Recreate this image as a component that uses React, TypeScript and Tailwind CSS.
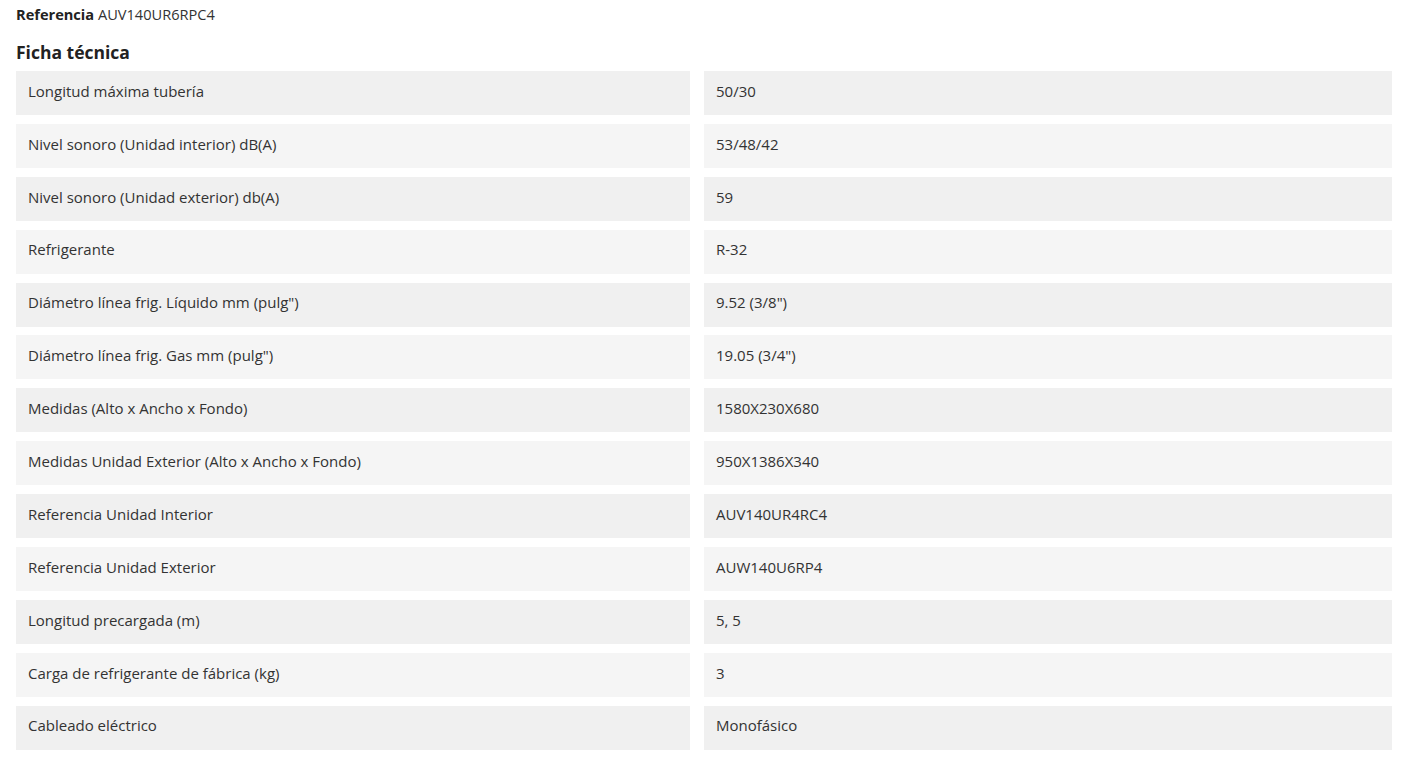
const rows: [string, string][] = [
  ["Longitud máxima tubería", "50/30"],
  ["Nivel sonoro (Unidad interior) dB(A)", "53/48/42"],
  ["Nivel sonoro (Unidad exterior) db(A)", "59"],
  ["Refrigerante", "R-32"],
  ["Diámetro línea frig. Líquido mm (pulg\")", "9.52 (3/8\")"],
  ["Diámetro línea frig. Gas mm (pulg\")", "19.05 (3/4\")"],
  ["Medidas (Alto x Ancho x Fondo)", "1580X230X680"],
  ["Medidas Unidad Exterior (Alto x Ancho x Fondo)", "950X1386X340"],
  ["Referencia Unidad Interior", "AUV140UR4RC4"],
  ["Referencia Unidad Exterior", "AUW140U6RP4"],
  ["Longitud precargada (m)", "5, 5"],
  ["Carga de refrigerante de fábrica (kg)", "3"],
  ["Cableado eléctrico", "Monofásico"],
];

export default function App() {
  return (
    <div className="min-h-screen bg-white pl-[16px] pr-[12px] text-[#333] font-['Open_Sans',sans-serif]">
      <p className="pt-[4px] text-[14.6px] leading-[20px]">
        <span className="font-bold text-[#222]">Referencia</span> AUV140UR6RPC4
      </p>
      <h2 className="mt-[17px] text-[17.5px] leading-[22px] font-bold text-[#222]">Ficha técnica</h2>
      <div className="mt-[8px] grid grid-cols-[674px_688px] gap-x-[14px] gap-y-[8.9px]">
        {rows.map(([k, v], i) => {
          const bg = i % 2 === 0 ? "bg-[#f0f0f0]" : "bg-[#f5f5f5]";
          return (
            <div key={k} className="contents">
              <div className={`${bg} h-[44px] flex items-center px-[12px] pb-[4px] text-[15px]`}>{k}</div>
              <div className={`${bg} h-[44px] flex items-center px-[12px] pb-[4px] text-[15px]`}>{v}</div>
            </div>
          );
        })}
      </div>
    </div>
  );
}
